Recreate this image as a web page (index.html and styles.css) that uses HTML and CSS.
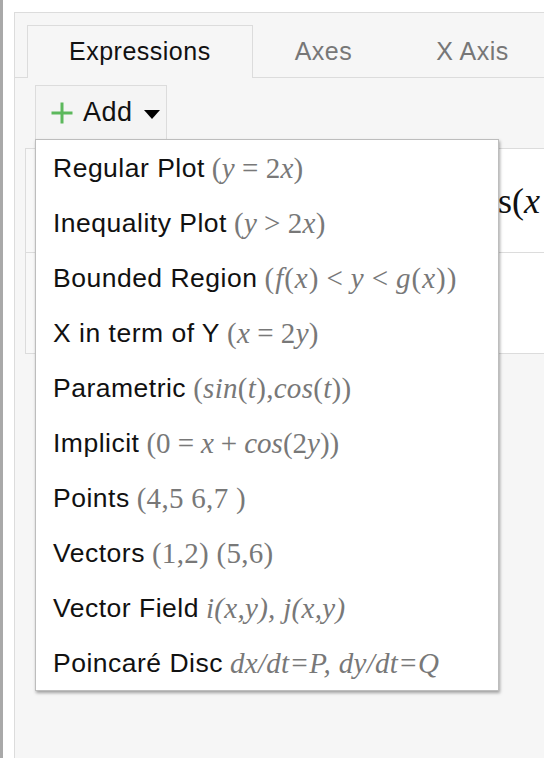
FILE: index.html
```html
<!DOCTYPE html>
<html>
<head>
<meta charset="utf-8">
<link rel="stylesheet" href="styles.css">
</head>
<body>
<div class="page">
  <div class="edge"></div>
  <div class="panel">
    <div class="tabs">
      <div class="tab active">Expressions</div>
      <div class="tab">Axes</div>
      <div class="tab">X Axis</div>
    </div>
    <div class="toolbar">
      <div class="dropdown">
        <div class="add-btn">
          <svg class="plus" width="24" height="24" viewBox="0 0 24 24"><path d="M12 1.5V22.5M1.5 12H22.5" stroke="#5cb85c" stroke-width="3" fill="none"/></svg>
          <span class="add-label">Add</span>
          <svg class="caret" width="16" height="9" viewBox="0 0 16 9"><path d="M0 0H16L8 9Z" fill="#000"/></svg>
        </div>
        <ul class="menu">
          <li><span class="lbl">Regular Plot</span> <span class="m">(<i>y</i><b class="op">=</b>2<i>x</i>)</span></li>
          <li><span class="lbl">Inequality Plot</span> <span class="m">(<i>y</i><b class="op">&gt;</b>2<i>x</i>)</span></li>
          <li><span class="lbl">Bounded Region</span> <span class="m wide">(<i>f</i>(<i>x</i>)<b class="op">&lt;</b><i>y</i><b class="op">&lt;</b><i>g</i>(<i>x</i>))</span></li>
          <li><span class="lbl">X in term of Y</span> <span class="m">(<i>x</i><b class="op">=</b>2<i>y</i>)</span></li>
          <li><span class="lbl">Parametric</span> <span class="m">(<i>sin</i>(<i>t</i>),<i>cos</i>(<i>t</i>))</span></li>
          <li><span class="lbl">Implicit</span> <span class="m tight">(0<b class="op">=</b><i>x</i><b class="op">+</b><i>cos</i>(2<i>y</i>))</span></li>
          <li><span class="lbl">Points</span> <span class="m">(4,5 6,7 )</span></li>
          <li><span class="lbl">Vectors</span> <span class="m">(1,2) (5,6)</span></li>
          <li><span class="lbl">Vector Field</span> <span class="m it">i(x,y), j(x,y)</span></li>
          <li><span class="lbl">Poincaré Disc</span> <span class="m it">dx/dt=P, dy/dt=Q</span></li>
        </ul>
      </div>
    </div>
    <div class="exprs">
      <div class="row first"><span class="gutter"></span><span class="expr">s(<i>x</i></span></div>
      <div class="row"><span class="gutter"></span></div>
    </div>
  </div>
</div>
</body>
</html>
```
FILE: styles.css
```css
html, body {
  margin: 0;
  padding: 0;
  background: #fff;
  overflow: hidden;
}
.page {
  display: flex;
  height: 758px;
  font-family: "Liberation Sans", Arial, sans-serif;
}
.edge {
  width: 3px;
  background: #a9a9a9;
  margin-right: 11px;
  flex: none;
}
.panel {
  flex: 1;
  margin-top: 12px;
  border-top: 1px solid #dcdcdc;
  border-left: 1px solid #dcdcdc;
  background: #f6f6f6;
  min-width: 0;
}
.tabs {
  display: flex;
  padding: 12px 0 0 12px;
  border-bottom: 1px solid #dcdcdc;
}
.tab {
  height: 52px;
  line-height: 51px;
  padding: 0 41px;
  border: 1px solid transparent;
  border-bottom: none;
  margin-bottom: -1px;
  font-size: 25px;
  letter-spacing: 0.5px;
  color: #777;
  white-space: nowrap;
}
.tab.active {
  color: #111;
  border-color: #dcdcdc;
  background: #f6f6f6;
}
.toolbar {
  display: flex;
  padding: 7px 0 0 20px;
}
.dropdown {
  position: relative;
}
.add-btn {
  display: flex;
  align-items: center;
  box-sizing: border-box;
  width: 132px;
  height: 54px;
  padding-left: 14px;
  border: 1px solid #dcdcdc;
  border-bottom: none;
  background: #f4f4f4;
}
.plus {
  flex: none;
}
.add-label {
  margin-left: 9px;
  font-size: 27px;
  letter-spacing: 0.5px;
  color: #111;
}
.caret {
  margin-left: 11px;
  margin-top: 4px;
  flex: none;
}
.menu {
  position: absolute;
  top: 100%;
  left: 0;
  margin: 0;
  padding: 0;
  list-style: none;
  width: 462px;
  background: #fff;
  border: 1px solid #bdbdbd;
  box-shadow: 1px 2px 3px rgba(0, 0, 0, 0.35);
  z-index: 5;
}
.menu li {
  box-sizing: border-box;
  height: 55px;
  padding-top: 2px;
  display: flex;
  align-items: center;
  padding-left: 17px;
  white-space: nowrap;
  gap: 7px;
}
.lbl {
  font-size: 26.5px;
  letter-spacing: 0.5px;
  color: #111;
}
.m {
  font-family: "Liberation Serif", "Times New Roman", serif;
  font-size: 29px;
  letter-spacing: 0.3px;
  color: #787878;
}
.m.wide {
  letter-spacing: 1px;
}
.m.tight {
  letter-spacing: 0;
}
.m i, .m.it {
  font-style: italic;
}
.op {
  font-weight: normal;
  padding: 0 7px;
}
.exprs {
  margin: 9px 0 0 10px;
  border: 1px solid #dcdcdc;
  border-right: none;
  background: #fff;
}
.row {
  display: flex;
  align-items: center;
  height: 103px;
}
.row.first {
  border-bottom: 1px solid #dcdcdc;
}
.row + .row {
  height: 100px;
}
.gutter {
  align-self: stretch;
  width: 9px;
  background: #f8f8f8;
  border-right: 1px solid #e4e4e4;
  flex: none;
}
.expr {
  margin-left: 462px;
  font-family: "Liberation Serif", "Times New Roman", serif;
  font-size: 36px;
  color: #111;
  white-space: nowrap;
}
.expr i {
  font-style: italic;
}
```
